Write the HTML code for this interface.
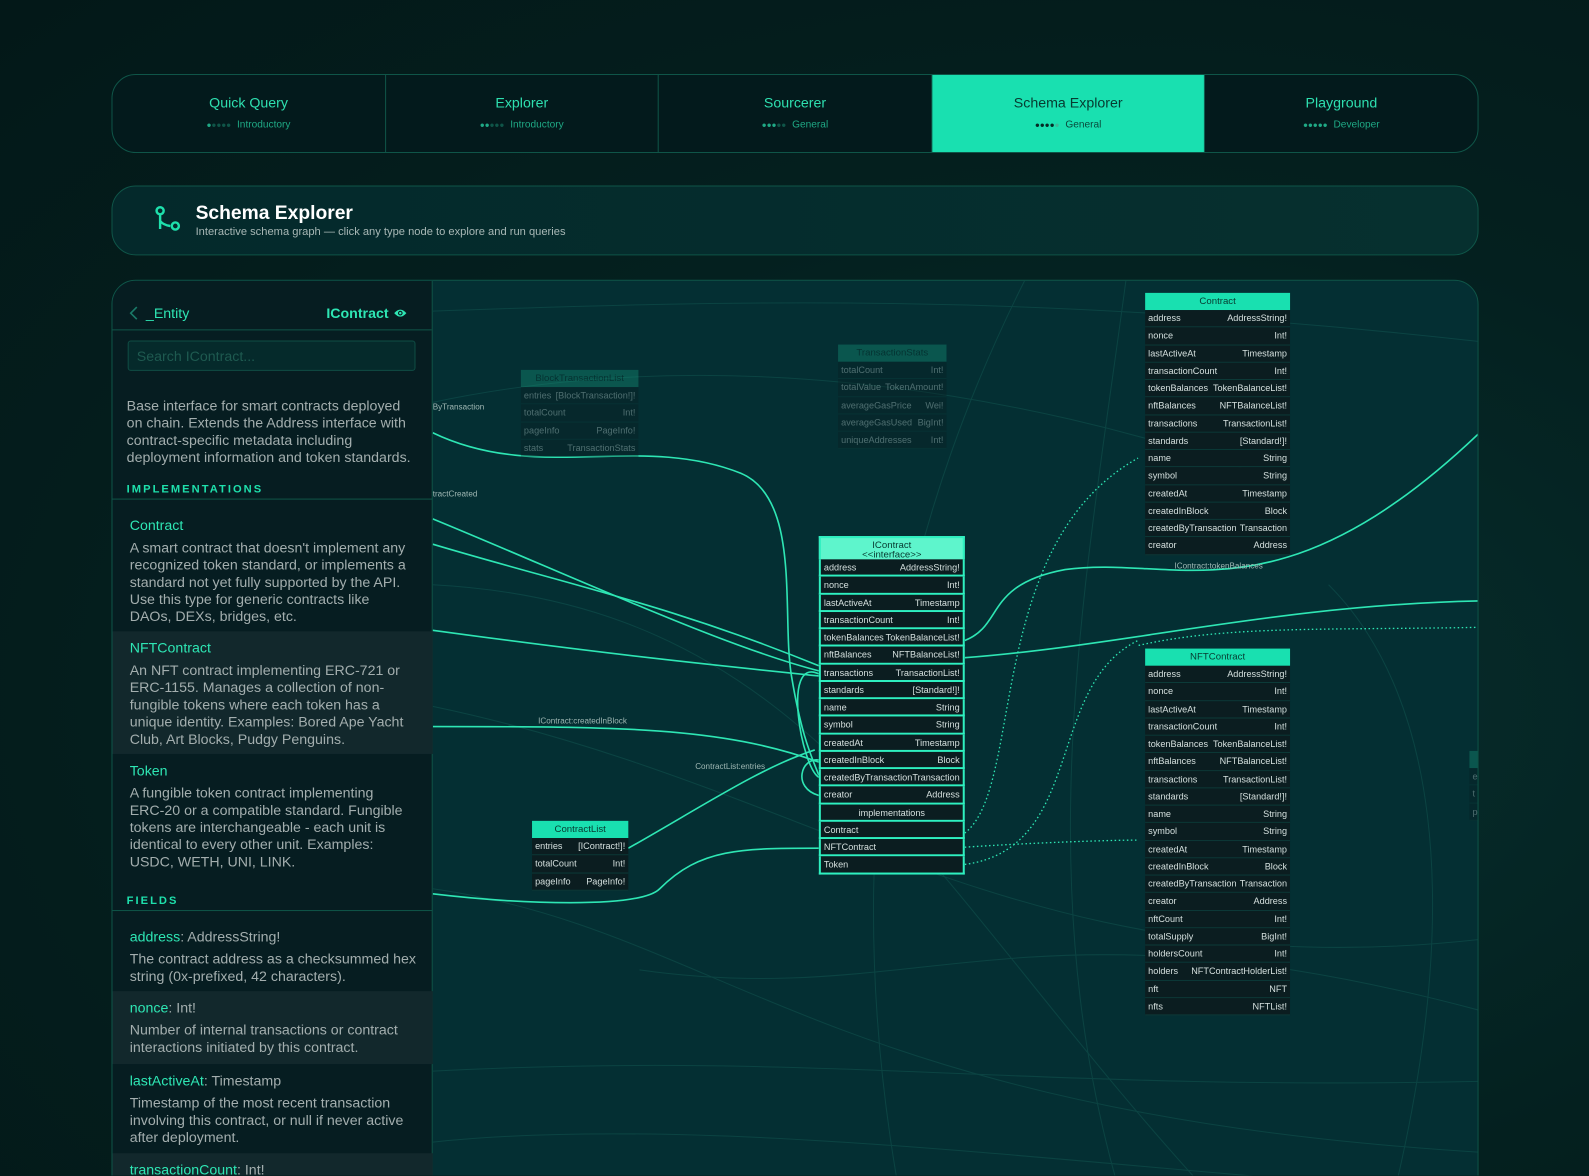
<!DOCTYPE html>
<html style="overflow:hidden;height:1176px"><head><meta charset="utf-8"><style>
*{box-sizing:border-box;margin:0;padding:0}
body{width:1589px;height:1176px;overflow:hidden;background:radial-gradient(ellipse at 70% 60%,#07302f 0%,#04201f 50%,#031818 100%);font-family:"Liberation Sans",sans-serif;position:relative}
#w{position:absolute;left:0;top:0;width:1568px;height:1160px;overflow:hidden;transform:scale(1.0134);transform-origin:0 0}
.tabs{position:absolute;left:110px;top:73px;width:1349px;height:78px;border:1px solid #0f5548;border-radius:24px;overflow:hidden;display:flex;background:#031a1c}
.tab{flex:1;border-right:1px solid #0f5548;text-align:center;color:#2ee0b0}
.tab:last-child{border-right:none}
.tab .t{font-size:14px;margin-top:19px}
.tab .s{font-size:10px;margin-top:9px;color:#1fa985}
.dots{letter-spacing:0px;font-size:8px;margin-right:3px}
.tab.act{background:#19e0b0;color:#073a30}
.tab.act .s{color:#0a4a3c}
.hdr{position:absolute;left:110px;top:183px;width:1349px;height:69px;border:1px solid #0f5548;border-radius:24px;background:linear-gradient(90deg,#04292b,#06302f)}
.hdr h1{position:absolute;left:82px;top:16px;color:#fff;font-size:19px;font-weight:bold}
.hdr p{position:absolute;left:82px;top:39px;color:#a8b8b6;font-size:11px}
.main{position:absolute;left:110px;top:276px;width:1349px;height:920px;border:1px solid #0f5548;border-radius:24px;overflow:hidden;background:#042f33}
.side{position:absolute;left:0;top:0;width:316px;height:920px;background:#061d21;border-right:1px solid #0f5548}
.side .bar{height:49px;border-bottom:1px solid #0f5548;position:relative}
.search{position:absolute;left:15px;top:59px;width:284px;height:30px;border:1px solid #0f4d44;border-radius:3px;background:#052a2b;color:#1e5a50;font-size:14px;padding:6px 8px}
.desc{position:absolute;left:14px;top:115px;width:282px;color:#a3aeae;font-size:14px;line-height:17px}
.sec{position:absolute;left:0;width:316px;color:#1ee0ac;font-size:11px;font-weight:bold;letter-spacing:2px;padding-left:14px;border-bottom:1px solid #0f5548;height:16px}
.item{position:absolute;left:0;width:316px;padding:8px 18px 0 17px;color:#a3aeae;font-size:14px;line-height:17px}
.item b{display:block;font-weight:normal;color:#2ee6b4;margin-bottom:5px}
.item b span{color:#a3aeae}
.alt{background:#12282c}
.node{position:absolute;font-size:9px;color:#dbe}
.node .h{background:#19e0b0;color:#073a30;text-align:center;font-size:9.5px;height:17px;line-height:17px}
.node .r{height:17.25px;line-height:16px;padding:0 3px;display:flex;justify-content:space-between;background:#0b1d20;border-bottom:1px solid #0c3a38;color:#d5e0de;white-space:nowrap}
.ic .r{border:2px solid #2ef0c0;border-top:none}
.fade{opacity:.35}
.lbl{position:absolute;font-size:8px;color:#a0b8b4}
</style></head><body><div id="w">
<div class="tabs">
<div class="tab"><div class="t">Quick Query</div><div class="s"><span class="dots">●<span style="color:#0f5548">●●●●</span></span> Introductory</div></div>
<div class="tab"><div class="t">Explorer</div><div class="s"><span class="dots">●●<span style="color:#0f5548">●●●</span></span> Introductory</div></div>
<div class="tab"><div class="t">Sourcerer</div><div class="s"><span class="dots">●●●<span style="color:#0f5548">●●</span></span> General</div></div>
<div class="tab act"><div class="t">Schema Explorer</div><div class="s"><span class="dots" style="color:#052a24">●●●●<span style="color:#3fb898">●</span></span> General</div></div>
<div class="tab"><div class="t">Playground</div><div class="s"><span class="dots">●●●●●</span> Developer</div></div>
</div>
<div class="hdr">
<svg style="position:absolute;left:40px;top:18px" width="30" height="30" viewBox="0 0 30 30" fill="none" stroke="#1ee0ac" stroke-width="2.4"><circle cx="7" cy="6" r="3.5"/><path d="M7 9.5V24M7 16q3 4 10 5"/><circle cx="22" cy="21" r="3.5"/></svg>
<h1>Schema Explorer</h1><p>Interactive schema graph — click any type node to explore and run queries</p></div>
<div class="main">
<svg style="position:absolute;left:0;top:0" width="1349" height="920" fill="none">
<g stroke="#1a6a60" stroke-width="1" opacity=".35">
<path d="M316 30 C600 20 900 10 1349 60"/><path d="M316 120 C600 60 900 110 1130 190"/><path d="M316 420 C700 500 900 700 1349 650"/><path d="M316 600 C600 640 700 820 1349 860"/><path d="M316 780 C700 760 900 800 1349 790"/><path d="M316 850 C600 820 1000 880 1349 900"/><path d="M520 680 C800 720 900 600 1349 720"/><path d="M900 0 C800 200 700 500 780 920"/><path d="M1000 0 C960 300 900 600 1000 920"/><path d="M1200 300 C1300 400 1340 600 1260 920"/><path d="M316 300 C700 320 800 600 1100 920"/>
</g>
<g stroke="#2ee6b4" stroke-width="1.6">
<path d="M316 150 C420 200 520 150 620 190 C680 215 660 330 670 390 C680 450 690 470 697 488"/>
<path d="M316 235 C450 290 600 360 697 385"/>
<path d="M316 260 C450 300 550 320 697 380"/>
<path d="M316 345 C500 370 600 380 697 390"/>
<path d="M316 440 C500 440 600 440 697 475"/>
<path d="M316 605 C400 615 520 620 540 600 C580 560 620 560 697 560"/>
<path d="M509 560 C580 520 640 480 693 463"/>
<path d="M841 355 C880 340 860 300 940 285 C1050 270 1150 340 1349 150"/>
<path d="M841 372 C1000 360 1150 320 1349 316"/>
<path d="M697 388 C660 370 680 480 697 490 M697 473 C680 470 670 500 697 508"/>
</g>
<g stroke="#2ee6b4" stroke-width="1.3" stroke-dasharray="1.5 2.5">
<path d="M841 545 C900 500 860 260 1012 175"/>
<path d="M841 559 C900 555 980 552 1012 552"/>
<path d="M841 576 C960 560 920 400 1012 355"/>
<path d="M1349 342 C1200 345 1100 340 1012 360"/>
</g>
</svg>
<div class="side">
<div class="bar"><svg style="position:absolute;left:16px;top:25px" width="10" height="14" viewBox="0 0 10 14" fill="none" stroke="#1a7a68" stroke-width="1.6"><path d="M8 1L2 7l6 6"/></svg><span style="position:absolute;left:33px;top:24px;color:#2ee6b4;font-size:14px">_Entity</span><span style="position:absolute;left:211px;top:24px;color:#2ee6b4;font-size:14px;font-weight:bold">IContract</span><svg style="position:absolute;left:277px;top:27px" width="14" height="10" viewBox="0 0 14 10"><path d="M1 5Q7 -2 13 5Q7 12 1 5Z" fill="#2ee6b4"/><circle cx="7" cy="5" r="2.3" fill="#061d21"/><circle cx="7" cy="5" r="1.2" fill="#2ee6b4"/></svg></div>
<div class="search">Search IContract...</div>
<div class="desc">Base interface for smart contracts deployed on chain. Extends the Address interface with contract-specific metadata including deployment information and token standards.</div>
<div class="sec" style="top:200px">IMPLEMENTATIONS</div>
<div class="item" style="top:225px;height:121px"><b>Contract</b>A smart contract that doesn't implement any recognized token standard, or implements a standard not yet fully supported by the API. Use this type for generic contracts like DAOs, DEXs, bridges, etc.</div>
<div class="item alt" style="top:346px;height:121px"><b>NFTContract</b>An NFT contract implementing ERC-721 or ERC-1155. Manages a collection of non-fungible tokens where each token has a unique identity. Examples: Bored Ape Yacht Club, Art Blocks, Pudgy Penguins.</div>
<div class="item" style="top:467px;height:121px;padding-right:26px"><b>Token</b>A fungible token contract implementing ERC-20 or a compatible standard. Fungible tokens are interchangeable - each unit is identical to every other unit. Examples: USDC, WETH, UNI, LINK.</div>
<div class="sec" style="top:606px">FIELDS</div>
<div class="item" style="top:630px;height:71px;padding-top:9px;padding-right:8px"><b>address<span>: AddressString!</span></b>The contract address as a checksummed hex string (0x-prefixed, 42 characters).</div>
<div class="item alt" style="top:701px;height:72px"><b>nonce<span>: Int!</span></b>Number of internal transactions or contract interactions initiated by this contract.</div>
<div class="item" style="top:773px;height:88px"><b>lastActiveAt<span>: Timestamp</span></b>Timestamp of the most recent transaction involving this contract, or null if never active after deployment.</div>
<div class="item alt" style="top:861px;height:60px"><b>transactionCount<span>: Int!</span></b></div>
</div>
<div class="lbl" style="left:316px;top:120px">ByTransaction</div>
<div class="lbl" style="left:316px;top:206px">tractCreated</div>
<div class="lbl" style="left:420px;top:430px">IContract:createdInBlock</div>
<div class="lbl" style="left:575px;top:475px">ContractList:entries</div>
<div class="lbl" style="left:1048px;top:277px">IContract:tokenBalances</div>

<div class="node fade" style="left:403px;top:88px;width:116px"><div class="h" style="background:#19a080">BlockTransactionList</div><div class="r"><span>entries</span><span>[BlockTransaction!]!</span></div><div class="r"><span>totalCount</span><span>Int!</span></div><div class="r"><span>pageInfo</span><span>PageInfo!</span></div><div class="r"><span>stats</span><span>TransactionStats</span></div></div>
<div class="node fade" style="left:716px;top:63px;width:107px"><div class="h" style="background:#19a080">TransactionStats</div><div class="r"><span>totalCount</span><span>Int!</span></div><div class="r"><span>totalValue</span><span>TokenAmount!</span></div><div class="r"><span>averageGasPrice</span><span>Wei!</span></div><div class="r"><span>averageGasUsed</span><span>BigInt!</span></div><div class="r"><span>uniqueAddresses</span><span>Int!</span></div></div>

<div class="node" style="left:414px;top:533px;width:95px"><div class="h">ContractList</div><div class="r"><span>entries</span><span>[IContract!]!</span></div><div class="r"><span>totalCount</span><span>Int!</span></div><div class="r"><span>pageInfo</span><span>PageInfo!</span></div></div>

<div class="node ic" style="left:697px;top:252px;width:144px"><div class="h" style="background:#5ef5cc;height:23px;line-height:9px;padding-top:3px;border:2px solid #2ef0c0;border-bottom:none">IContract<br>&lt;&lt;interface&gt;&gt;</div>
<div class="r"><span>address</span><span>AddressString!</span></div><div class="r"><span>nonce</span><span>Int!</span></div><div class="r"><span>lastActiveAt</span><span>Timestamp</span></div><div class="r"><span>transactionCount</span><span>Int!</span></div><div class="r"><span>tokenBalances</span><span>TokenBalanceList!</span></div><div class="r"><span>nftBalances</span><span>NFTBalanceList!</span></div><div class="r"><span>transactions</span><span>TransactionList!</span></div><div class="r"><span>standards</span><span>[Standard!]!</span></div><div class="r"><span>name</span><span>String</span></div><div class="r"><span>symbol</span><span>String</span></div><div class="r"><span>createdAt</span><span>Timestamp</span></div><div class="r"><span>createdInBlock</span><span>Block</span></div><div class="r"><span>createdByTransaction</span><span>Transaction</span></div><div class="r"><span>creator</span><span>Address</span></div><div class="r" style="justify-content:center"><span>implementations</span></div><div class="r"><span>Contract</span></div><div class="r"><span>NFTContract</span></div><div class="r"><span>Token</span></div></div>

<div class="node" style="left:1019px;top:12px;width:143px"><div class="h">Contract</div>
<div class="r"><span>address</span><span>AddressString!</span></div><div class="r"><span>nonce</span><span>Int!</span></div><div class="r"><span>lastActiveAt</span><span>Timestamp</span></div><div class="r"><span>transactionCount</span><span>Int!</span></div><div class="r"><span>tokenBalances</span><span>TokenBalanceList!</span></div><div class="r"><span>nftBalances</span><span>NFTBalanceList!</span></div><div class="r"><span>transactions</span><span>TransactionList!</span></div><div class="r"><span>standards</span><span>[Standard!]!</span></div><div class="r"><span>name</span><span>String</span></div><div class="r"><span>symbol</span><span>String</span></div><div class="r"><span>createdAt</span><span>Timestamp</span></div><div class="r"><span>createdInBlock</span><span>Block</span></div><div class="r"><span>createdByTransaction</span><span>Transaction</span></div><div class="r"><span>creator</span><span>Address</span></div></div>

<div class="node" style="left:1019px;top:363px;width:143px"><div class="h">NFTContract</div>
<div class="r"><span>address</span><span>AddressString!</span></div><div class="r"><span>nonce</span><span>Int!</span></div><div class="r"><span>lastActiveAt</span><span>Timestamp</span></div><div class="r"><span>transactionCount</span><span>Int!</span></div><div class="r"><span>tokenBalances</span><span>TokenBalanceList!</span></div><div class="r"><span>nftBalances</span><span>NFTBalanceList!</span></div><div class="r"><span>transactions</span><span>TransactionList!</span></div><div class="r"><span>standards</span><span>[Standard!]!</span></div><div class="r"><span>name</span><span>String</span></div><div class="r"><span>symbol</span><span>String</span></div><div class="r"><span>createdAt</span><span>Timestamp</span></div><div class="r"><span>createdInBlock</span><span>Block</span></div><div class="r"><span>createdByTransaction</span><span>Transaction</span></div><div class="r"><span>creator</span><span>Address</span></div><div class="r"><span>nftCount</span><span>Int!</span></div><div class="r"><span>totalSupply</span><span>BigInt!</span></div><div class="r"><span>holdersCount</span><span>Int!</span></div><div class="r"><span>holders</span><span>NFTContractHolderList!</span></div><div class="r"><span>nft</span><span>NFT</span></div><div class="r"><span>nfts</span><span>NFTList!</span></div></div>
<div class="node fade" style="left:1339px;top:464px;width:20px"><div class="h" style="background:#19a080">&nbsp;</div><div class="r">e</div><div class="r">t</div><div class="r">p</div></div>
</div>
</div></body></html>
